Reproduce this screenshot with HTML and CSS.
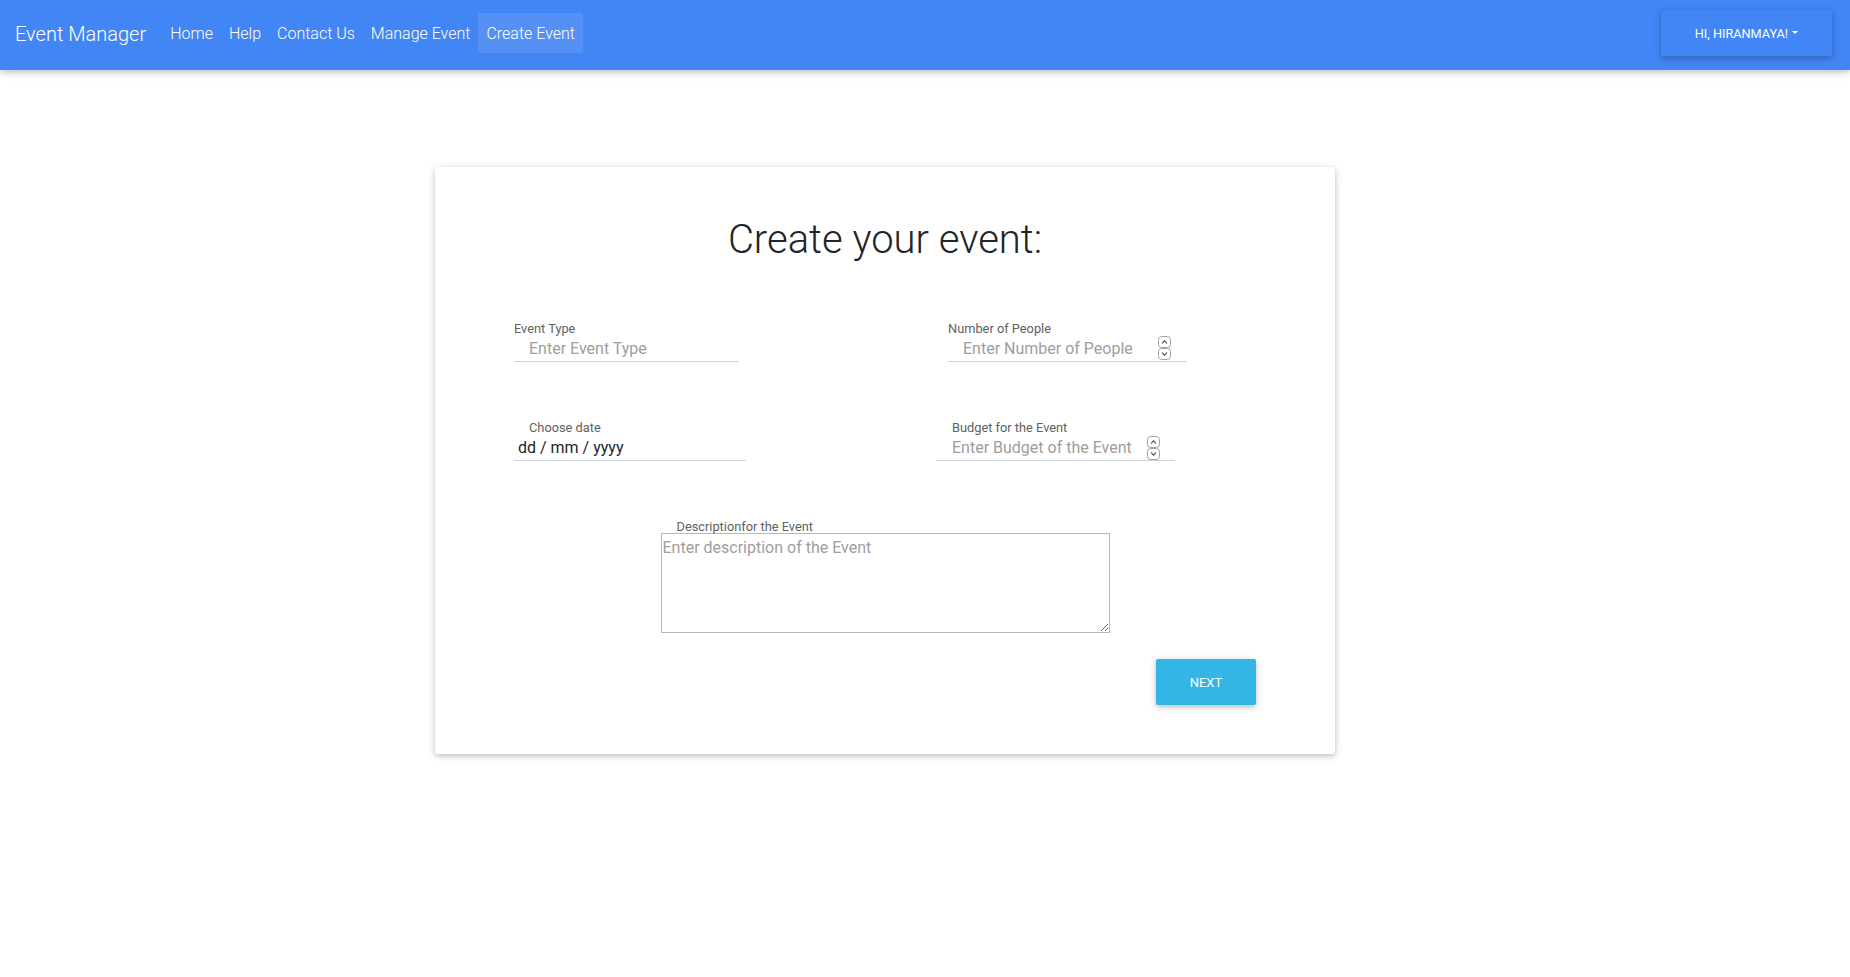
FILE: index.html
```html
<!DOCTYPE html>
<html lang="en">
<head>
<meta charset="utf-8">
<title>Event Manager</title>
<link rel="stylesheet" href="styles.css">
</head>
<body>
<nav class="navbar">
  <a class="brand" href="#">Event Manager</a>
  <ul class="nav-links">
    <li><a class="nav-link" href="#">Home</a></li>
    <li><a class="nav-link" href="#">Help</a></li>
    <li><a class="nav-link" href="#">Contact Us</a></li>
    <li><a class="nav-link" href="#">Manage Event</a></li>
    <li><a class="nav-link active" href="#">Create Event</a></li>
  </ul>
  <button class="btn btn-user">HI, HIRANMAYA!<span class="caret"></span></button>
</nav>

<main class="card">
  <h1 class="title">Create your event:</h1>

  <div class="form-row row-1">
    <div class="field field-type">
      <label class="lbl">Event Type</label>
      <div class="line">
        <input class="inp pad15" type="text" placeholder="Enter Event Type">
      </div>
    </div>
    <div class="field field-people">
      <label class="lbl">Number of People</label>
      <div class="line">
        <input class="inp pad15" type="number" placeholder="Enter Number of People">
        <svg class="spin" width="13" height="24" viewBox="0 0 13 24"><rect x="0.5" y="0.5" width="12" height="11" rx="3" fill="#fff" stroke="#a3a3a3"/><rect x="0.5" y="12.5" width="12" height="11" rx="3" fill="#fff" stroke="#a3a3a3"/><path d="M4 7.5 L6.5 4.8 L9 7.5" fill="none" stroke="#444" stroke-width="1.1"/><path d="M4 16.5 L6.5 19.2 L9 16.5" fill="none" stroke="#444" stroke-width="1.1"/></svg>
      </div>
    </div>
  </div>

  <div class="form-row row-2">
    <div class="field field-date">
      <label class="lbl lbl-indent">Choose date</label>
      <div class="line">
        <input class="inp date pad4" type="text" value="dd / mm / yyyy">
      </div>
    </div>
    <div class="field field-budget">
      <label class="lbl lbl-indent">Budget for the Event</label>
      <div class="line">
        <input class="inp pad16" type="number" placeholder="Enter Budget of the Event">
        <svg class="spin spin-b" width="13" height="24" viewBox="0 0 13 24"><rect x="0.5" y="0.5" width="12" height="11" rx="3" fill="#fff" stroke="#a3a3a3"/><rect x="0.5" y="12.5" width="12" height="11" rx="3" fill="#fff" stroke="#a3a3a3"/><path d="M4 7.5 L6.5 4.8 L9 7.5" fill="none" stroke="#444" stroke-width="1.1"/><path d="M4 16.5 L6.5 19.2 L9 16.5" fill="none" stroke="#444" stroke-width="1.1"/></svg>
      </div>
    </div>
  </div>

  <div class="desc">
    <label class="lbl lbl-desc">Descriptionfor the Event</label>
    <textarea class="textarea" placeholder="Enter description of the Event"></textarea>
  </div>

  <div class="actions">
    <button class="btn btn-next">NEXT</button>
  </div>
</main>
</body>
</html>
```

FILE: styles.css
```css
* { box-sizing: border-box; }

html, body {
  margin: 0;
  padding: 0;
  background: #fff;
  font-family: Roboto, "Liberation Sans", Arial, sans-serif;
  color: #212529;
}

/* ---------- navbar ---------- */
.navbar {
  display: flex;
  align-items: center;
  height: 70px;
  padding: 10px 18px 14px 15px;
  background: #4285f4;
  box-shadow: 0 2px 5px 0 rgba(0,0,0,.16), 0 2px 10px 0 rgba(0,0,0,.12);
}

.brand {
  color: #fff;
  text-decoration: none;
  font-weight: 300;
  font-size: 20px;
  line-height: 30px;
  margin-right: 16px;
  position: relative;
  top: 1px;
}

.nav-links {
  display: flex;
  list-style: none;
  margin: 0;
  padding: 0;
  flex: 1;
}

.nav-link {
  display: block;
  padding: 9px 8px 7px;
  color: #fff;
  text-decoration: none;
  font-weight: 300;
  font-size: 16px;
  line-height: 24px;
  border-radius: 2px;
}

.nav-link.active {
  background: rgba(255,255,255,.1);
}

.btn {
  font-family: Roboto, "Liberation Sans", Arial, sans-serif;
  font-size: 12.96px;
  font-weight: 400;
  line-height: 19px;
  color: #fff;
  border: 0;
  border-radius: 2px;
  padding: 13px 34px;
  box-shadow: 0 2px 5px 0 rgba(0,0,0,.16), 0 2px 10px 0 rgba(0,0,0,.12);
  cursor: pointer;
}

.btn-user {
  background: #4285f4;
  height: 46px;
  padding: 13px 34px 13px 34px;
  display: flex;
  align-items: center;
  font-size: 12.7px;
}

.caret {
  display: inline-block;
  width: 0;
  height: 0;
  margin-left: 4px;
  border-top: 3.9px solid #fff;
  border-left: 3.9px solid transparent;
  border-right: 3.9px solid transparent;
  position: relative;
  top: -1px;
}

/* ---------- card ---------- */
.card {
  width: 900px;
  margin: 97px 0 40px 435px;
  padding: 49px 0 49px;
  background: #fff;
  border-radius: 3px;
  box-shadow: 0 2px 5px 0 rgba(0,0,0,.16), 0 2px 10px 0 rgba(0,0,0,.12);
}

.title {
  margin: 0;
  text-align: center;
  font-weight: 300;
  font-size: 40px;
  line-height: 48px;
  color: #212529;
}

.form-row {
  display: flex;
  padding-left: 79px;
}

.row-1 { margin-top: 57px; }
.row-2 { margin-top: 58px; }

.lbl {
  display: block;
  font-size: 12.8px;
  line-height: 15px;
  color: #616161;
  margin-bottom: 3px;
}

.lbl-indent { padding-left: 15px; }
.field-budget .lbl-indent { padding-left: 16px; }

.line {
  display: flex;
  align-items: flex-end;
  border-bottom: 1px solid #ced4da;
  height: 23px;
}

.inp {
  flex: 1;
  min-width: 0;
  border: 0;
  outline: none;
  background: transparent;
  font-family: Roboto, "Liberation Sans", Arial, sans-serif;
  font-size: 16px;
  line-height: 19px;
  height: 22px;
  padding: 0 0 3px;
  color: #212529;
  -moz-appearance: textfield;
  appearance: textfield;
}

.inp::-webkit-inner-spin-button,
.inp::-webkit-outer-spin-button {
  -webkit-appearance: none;
  margin: 0;
}

.inp::placeholder { color: #9e9e9e; opacity: 1; }

.pad15 { padding-left: 15px; }
.pad16 { padding-left: 16px; }
.pad4 { padding-left: 4px; }

.field-type { width: 225px; margin-right: 209px; }
.field-people { width: 239px; }
.field-date { width: 232px; margin-right: 190px; }
.field-budget { width: 239px; }

.spin {
  display: block;
  flex: none;
  align-self: flex-end;
  margin: -4px 16px 1px 0;
}
.spin-b { margin-right: 15px; margin-bottom: 0; }

/* ---------- description ---------- */
.desc {
  width: 449px;
  margin: 60px auto 0;
}

.lbl-desc {
  padding-left: 16px;
  line-height: 12px;
  margin-bottom: 0;
}

.textarea {
  display: block;
  width: 449px;
  height: 100px;
  margin: 0;
  padding: 4px 2px 2px 1px;
  border: 1px solid #b8b8b8;
  border-radius: 0;
  font-family: Roboto, "Liberation Sans", Arial, sans-serif;
  font-size: 16px;
  color: #212529;
  resize: both;
  outline: none;
}

.textarea::placeholder { color: #9e9e9e; opacity: 1; }

/* ---------- actions ---------- */
.actions {
  display: flex;
  justify-content: flex-end;
  padding-right: 79px;
  margin-top: 26px;
}

.btn-next {
  background: #33b5e5;
  width: 100px;
  height: 46px;
  padding: 13px 0;
  text-align: center;
}
```
